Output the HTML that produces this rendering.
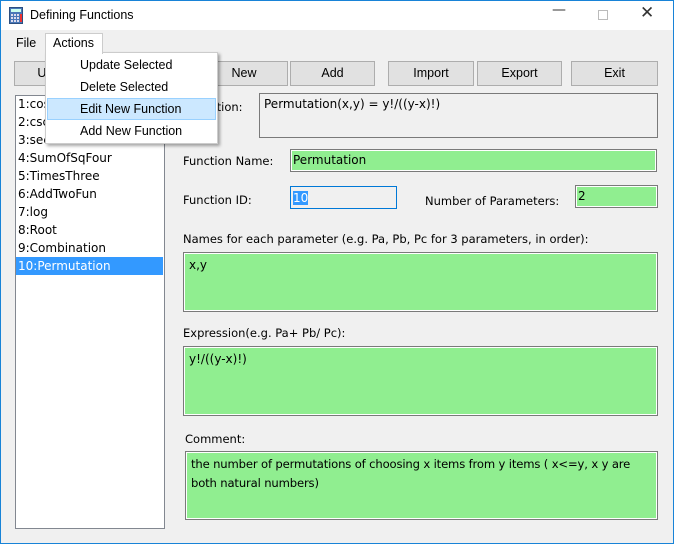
<!DOCTYPE html>
<html><head><style>
*{box-sizing:border-box;margin:0;padding:0}
body{width:674px;height:544px;overflow:hidden;background:#f0f0f0;font-family:"DejaVu Sans","Liberation Sans",sans-serif;font-size:11.5px;color:#000;position:relative}
.a{position:absolute}
.win{left:0;top:0;width:674px;height:544px;border:1px solid #1883d7}
.title{left:1px;top:1px;width:672px;height:29px;background:#fff}
.btn{position:absolute;top:61px;height:25px;background:#e1e1e1;border:1px solid #adadad;text-align:center;line-height:23px;font-size:12.5px;font-family:"Liberation Sans",sans-serif}
.g{background:#90ee90;border:1px solid #7a7a7a;box-shadow:inset 0 0 0 1px #fff}
.lbl{position:absolute;white-space:nowrap}
.li{position:absolute;left:16px;width:147px;height:18px;line-height:18px;padding-left:2px;font-size:12px}
.mi{position:absolute;left:80px;font-family:"Liberation Sans",sans-serif;font-size:12.5px;white-space:nowrap}
</style></head><body>
<div class="a win"></div>
<div class="a title"></div>
<svg class="a" style="left:9px;top:7px" width="14" height="17"><rect x="0.5" y="0.5" width="13" height="16" fill="#4a78b8" stroke="#2c4f80"/><rect x="2" y="2" width="10" height="3" fill="#cfe"/><g fill="#dde"><rect x="2" y="7" width="2" height="2"/><rect x="5" y="7" width="2" height="2"/><rect x="8" y="7" width="2" height="2"/><rect x="2" y="10" width="2" height="2"/><rect x="5" y="10" width="2" height="2"/><rect x="8" y="10" width="2" height="2"/><rect x="2" y="13" width="2" height="2"/><rect x="5" y="13" width="2" height="2"/><rect x="8" y="13" width="2" height="2"/></g><rect x="11" y="7" width="2" height="8" fill="#e33"/></svg>
<div class="lbl" style="left:30px;top:8px;font-family:'Liberation Sans',sans-serif;font-size:12.5px">Defining Functions</div>
<div class="lbl" style="left:552px;top:2px;font-size:14px;color:#333">&#8212;</div>
<div class="a" style="left:598px;top:10px;width:10px;height:10px;border:1px solid #bbb"></div>
<div class="lbl" style="left:640px;top:3px;font-size:17px;color:#333">&#10005;</div>
<div class="lbl" style="left:16px;top:36px;font-family:'Liberation Sans',sans-serif;font-size:12.5px">File</div>
<div class="btn" style="left:14px;width:87px">Update</div>
<div class="btn" style="left:103px;width:95px">Delete</div>
<div class="btn" style="left:200px;width:88px">New</div>
<div class="btn" style="left:290px;width:85px">Add</div>
<div class="btn" style="left:388px;width:86px">Import</div>
<div class="btn" style="left:477px;width:85px">Export</div>
<div class="btn" style="left:571px;width:87px">Exit</div>
<div class="a" style="left:15px;top:95px;width:150px;height:434px;background:#fff;border:1px solid #828790"></div>
<div class="li" style="top:95px">1:cos</div>
<div class="li" style="top:113px">2:csc</div>
<div class="li" style="top:131px">3:sec</div>
<div class="li" style="top:149px">4:SumOfSqFour</div>
<div class="li" style="top:167px">5:TimesThree</div>
<div class="li" style="top:185px">6:AddTwoFun</div>
<div class="li" style="top:203px">7:log</div>
<div class="li" style="top:221px">8:Root</div>
<div class="li" style="top:239px">9:Combination</div>
<div class="li" style="top:257px;background:#3399ff;color:#fff">10:Permutation</div>
<div class="lbl" style="left:183px;top:100px">Definition:</div>
<div class="a" style="left:259px;top:93px;width:399px;height:45px;border:1px solid #7a7a7a"></div>
<div class="lbl" style="left:264px;top:97px;font-size:12px">Permutation(x,y) = y!/((y-x)!)</div>
<div class="lbl" style="left:183px;top:154px">Function Name:</div>
<div class="a g" style="left:290px;top:149px;width:367px;height:23px"></div>
<div class="lbl" style="left:293px;top:153px;font-size:12px">Permutation</div>
<div class="lbl" style="left:183px;top:193px">Function ID:</div>
<div class="a" style="left:290px;top:186px;width:107px;height:23px;border:1px solid #0078d7;background:#f0f0f0"></div>
<div class="lbl" style="left:293px;top:191px;font-size:12px;background:#3399ff;color:#fff">10</div>
<div class="lbl" style="left:425px;top:194px">Number of Parameters:</div>
<div class="a g" style="left:575px;top:185px;width:83px;height:23px"></div>
<div class="lbl" style="left:578px;top:189px;font-size:12px">2</div>
<div class="lbl" style="left:183px;top:232px">Names for each parameter (e.g. Pa, Pb, Pc for 3 parameters, in order):</div>
<div class="a g" style="left:183px;top:252px;width:475px;height:60px"></div>
<div class="lbl" style="left:189px;top:258px;font-size:12px">x,y</div>
<div class="lbl" style="left:183px;top:326px">Expression(e.g. Pa+ Pb/ Pc):</div>
<div class="a g" style="left:183px;top:346px;width:475px;height:70px"></div>
<div class="lbl" style="left:189px;top:352px;font-size:12px">y!/((y-x)!)</div>
<div class="lbl" style="left:185px;top:432px">Comment:</div>
<div class="a g" style="left:185px;top:451px;width:473px;height:69px"></div>
<div class="lbl" style="left:191px;top:455px;font-size:11.6px;line-height:19px;letter-spacing:-0.15px">the number of permutations of choosing x items from y items ( x&lt;=y, x y are<br>both natural numbers)</div>
<!-- menu -->
<div class="a" style="left:45px;top:33px;width:58px;height:21px;background:#fff;border:1px solid #ccc;border-bottom:none;z-index:2"></div>
<div class="lbl" style="left:53px;top:36px;font-family:'Liberation Sans',sans-serif;font-size:12.5px;z-index:3">Actions</div>
<div class="a" style="left:45px;top:52px;width:173px;height:92px;background:#fff;border:1px solid #ccc;box-shadow:2px 2px 3px rgba(0,0,0,.35);z-index:1"></div>
<div class="a" style="left:47px;top:98px;width:169px;height:22px;background:#cce8ff;border:1px solid #99d1ff;z-index:2"></div>
<div style="position:absolute;z-index:3;left:0;top:0">
<div class="mi" style="top:58px">Update Selected</div>
<div class="mi" style="top:80px">Delete Selected</div>
<div class="mi" style="top:102px">Edit New Function</div>
<div class="mi" style="top:124px">Add New Function</div>
</div>
</body></html>
